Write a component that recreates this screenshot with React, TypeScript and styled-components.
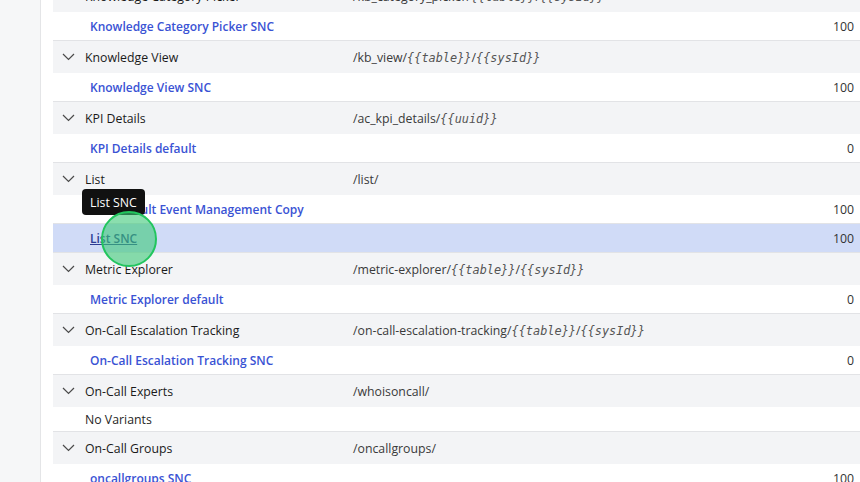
import React from "react";
import styled, { createGlobalStyle } from "styled-components";

const Global = createGlobalStyle`
  html, body { margin: 0; padding: 0; background: #fff; overflow: hidden; }
  body { font-family: "Open Sans", "Noto Sans", sans-serif; font-size: 12.3px; color: #1f1f1f; }
`;

const Page = styled.div`
  display: flex;
  width: 860px;
  height: 482px;
  overflow: hidden;
`;

const Sidebar = styled.div`
  width: 40px;
  flex: 0 0 40px;
  background: #f6f7f8;
  border-right: 1px solid #e4e5e7;
`;

const Main = styled.div`
  flex: 1;
  padding-left: 12px;
  overflow: hidden;
  position: relative;
`;

const Table = styled.div`
  margin-top: -20px;
  display: flex;
  flex-direction: column;
`;

const GroupRow = styled.div`
  display: grid;
  grid-template-columns: 300px 1fr;
  height: 32px;
  align-items: center;
  background: #f3f4f6;
`;

const GroupName = styled.div`
  display: flex;
  align-items: center;
  gap: 10px;
  padding-left: 9px;
  color: #1a1a1a;
  white-space: nowrap;
`;

const Path = styled.div`
  color: #3a3a3a;
  white-space: nowrap;
`;

const Mono = styled.span`
  font-family: "DejaVu Sans Mono", monospace;
  font-style: italic;
  font-size: 11.9px;
  color: #555;
`;

const VariantRow = styled.div<{ $active?: boolean; $short?: boolean }>`
  display: flex;
  align-items: center;
  justify-content: space-between;
  height: ${(p) => (p.$short ? 24 : 28)}px;
  border-bottom: 1px solid #e2e3e6;
  background: ${(p) => (p.$active ? "#d0dbf7" : "#fff")};
  padding: 0 6px 0 37px;
`;

const VariantLink = styled.a<{ $active?: boolean }>`
  color: ${(p) => (p.$active ? "#2d3c93" : "#3a53d4")};
  font-weight: 600;
  font-size: 12px;
  text-decoration: ${(p) => (p.$active ? "underline" : "none")};
  white-space: nowrap;
`;

const Plain = styled.span`
  color: #1f1f1f;
  margin-left: -5px;
`;

const Num = styled.span`
  color: #333;
`;

const Tooltip = styled.div`
  position: absolute;
  left: 41px;
  top: 189px;
  height: 26px;
  padding: 0 8px;
  display: flex;
  align-items: center;
  background: #111;
  color: #fff;
  border-radius: 4px;
  font-size: 12.3px;
  white-space: nowrap;
`;

const Click = styled.div`
  position: absolute;
  left: 60px;
  top: 211px;
  width: 52px;
  height: 52px;
  border-radius: 50%;
  background: rgba(60, 200, 120, 0.6);
  border: 2px solid #22c55e;
`;

const Chevron = () => (
  <svg width="13" height="8" viewBox="0 0 13 8" fill="none">
    <path d="M1 1 L6.5 6.5 L12 1" stroke="#4a4a4a" strokeWidth="1.2" />
  </svg>
);

type Variant = { name: string; value?: string; active?: boolean };
type Group = { name: string; path: React.ReactNode; variants: Variant[] | null };

const p = (a: string, ...rest: string[]) => (
  <>
    {a}
    {rest.map((r, i) =>
      i % 2 === 0 ? <Mono key={i}>{r}</Mono> : <React.Fragment key={i}>{r}</React.Fragment>
    )}
  </>
);

const groups: Group[] = [
  {
    name: "Knowledge Category Picker",
    path: p("/kb_category_picker/", "{{table}}", "/", "{{sysId}}"),
    variants: [{ name: "Knowledge Category Picker SNC", value: "100" }],
  },
  {
    name: "Knowledge View",
    path: p("/kb_view/", "{{table}}", "/", "{{sysId}}"),
    variants: [{ name: "Knowledge View SNC", value: "100" }],
  },
  {
    name: "KPI Details",
    path: p("/ac_kpi_details/", "{{uuid}}"),
    variants: [{ name: "KPI Details default", value: "0" }],
  },
  {
    name: "List",
    path: "/list/",
    variants: [
      { name: "List Default Event Management Copy", value: "100" },
      { name: "List SNC", value: "100", active: true },
    ],
  },
  {
    name: "Metric Explorer",
    path: p("/metric-explorer/", "{{table}}", "/", "{{sysId}}"),
    variants: [{ name: "Metric Explorer default", value: "0" }],
  },
  {
    name: "On-Call Escalation Tracking",
    path: p("/on-call-escalation-tracking/", "{{table}}", "/", "{{sysId}}"),
    variants: [{ name: "On-Call Escalation Tracking SNC", value: "0" }],
  },
  { name: "On-Call Experts", path: "/whoisoncall/", variants: null },
  {
    name: "On-Call Groups",
    path: "/oncallgroups/",
    variants: [{ name: "oncallgroups SNC", value: "100" }],
  },
];

export default function App() {
  return (
    <>
      <Global />
      <Page>
        <Sidebar />
        <Main>
          <Table>
            {groups.map((g) => (
              <React.Fragment key={g.name}>
                <GroupRow>
                  <GroupName>
                    <Chevron />
                    {g.name}
                  </GroupName>
                  <Path>{g.path}</Path>
                </GroupRow>
                {g.variants ? (
                  g.variants.map((v) => (
                    <VariantRow key={v.name} $active={v.active}>
                      <VariantLink $active={v.active}>{v.name}</VariantLink>
                      <Num>{v.value}</Num>
                    </VariantRow>
                  ))
                ) : (
                  <VariantRow $short>
                    <Plain>No Variants</Plain>
                  </VariantRow>
                )}
              </React.Fragment>
            ))}
          </Table>
          <Tooltip>List SNC</Tooltip>
          <Click />
        </Main>
      </Page>
    </>
  );
}
